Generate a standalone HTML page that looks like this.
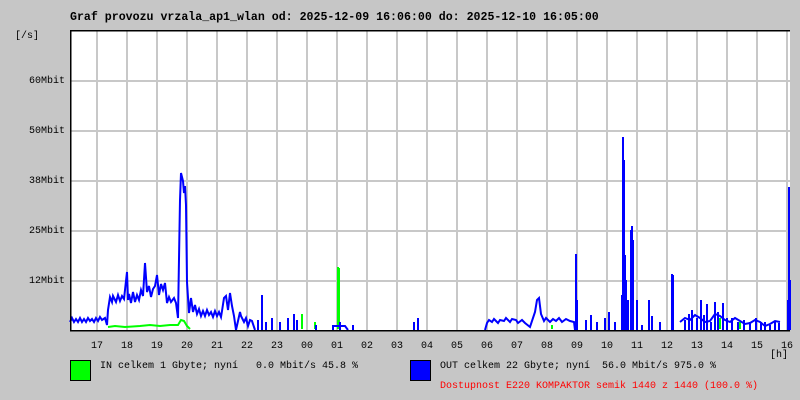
<!DOCTYPE html>
<html><head><meta charset="utf-8"><style>
html,body{margin:0;padding:0;background:#c6c6c6;width:800px;height:400px;overflow:hidden}
body{font-family:"Liberation Mono","DejaVu Sans Mono",monospace;position:relative}
.t{position:absolute;white-space:pre;font-size:10px;color:#000;line-height:12px}
.h{position:absolute;top:341px;width:30px;margin-left:-15px;text-align:center;font-size:10px;line-height:12px}
svg{position:absolute;left:0;top:0}
</style></head><body>
<svg width="800" height="400" viewBox="0 0 800 400" shape-rendering="crispEdges">
<rect x="70" y="30" width="720" height="300" fill="#fff"/>
<g stroke="#c8c8c8" stroke-width="2">
<path d="M97 31V330M127 31V330M157 31V330M187 31V330M217 31V330M247 31V330M277 31V330M307 31V330M337 31V330M367 31V330M397 31V330M427 31V330M457 31V330M487 31V330M517 31V330M547 31V330M577 31V330M607 31V330M637 31V330M667 31V330M697 31V330M727 31V330M757 31V330M787 31V330"/>
<path d="M70 81H790M70 131H790M70 181H790M70 231H790M70 281H790"/>
</g>
<g fill="none" stroke="#00ff00" stroke-width="2" shape-rendering="auto">
<polyline points="108,327 115,326 125,327 140,326 150,325 160,326 170,325 178,325 181,320 184,321 187,326 190,329"/>
<path d="M302 329V314M315 329V322M338 329V267M339 329V268M552 329V325M720 329V318M740 329V322M789 329V322"/>
</g>
<g fill="none" stroke="#0000ff" stroke-width="2" shape-rendering="auto">
<polyline points="70,322 72,318 74,322 76,319 78,322 80,318 82,322 84,319 86,322 88,318 90,321 92,319 94,322 96,318 98,321 100,317 102,320 105,318 107,325 108,310 110,297 112,302 113,296 116,302 118,295 120,301 122,296 124,299 127,272 128,300 129,294 131,303 133,292 135,302 137,295 139,300 141,290 143,296 145,263 147,292 149,286 151,297 153,289 155,286 157,275 159,295 161,284 163,290 165,283 167,303 169,297 171,302 174,298 176,303 178,318 180,200 181,173 183,181 184,193 185,186 186,205 187,282 189,313 191,298 193,312 195,305 197,314 199,309 201,316 203,311 205,316 207,310 209,315 211,312 213,317 215,311 217,316 219,312 221,317 222,311 224,298 226,296 228,310 230,293 232,306 234,316 236,330 238,321 240,312 241,316 244,322 246,318 248,326 250,320 252,321 255,330"/>
<path d="M258 330V320M262 330V295M266 330V322M272 330V318M280 330V322M288 330V318M294 330V314M297 330V320M316 330V325M340 330V322M353 330V325M414 330V322M418 330V318"/>
<polyline points="333,330 333,326 345,326 348,330"/>
<polyline points="485,330 487,323 489,320 492,322 494,319 498,323 500,320 504,321 506,318 510,322 512,319 516,320 518,323 522,320 525,323 530,327 535,312 537,300 539,298 541,314 544,321 546,318 550,322 553,319 556,321 559,318 562,322 566,319 570,321 574,322 575,330"/>
<path d="M576 330V254M577 330V300M586 330V320M591 330V315M597 330V322M605 330V318M609 330V312M615 330V322M622 330V295M623 330V137M624 330V160M625 330V255M626 330V280M628 330V300M631 330V230M632 330V226M633 330V240M637 330V300M642 330V325M649 330V300M652 330V316M660 330V322M672 330V274M673 330V275M685 330V320M689 330V314M692 330V310M697 330V318M701 330V300M704 330V315M707 330V304M711 330V322M715 330V302M718 330V312M723 330V303M727 330V318M732 330V318M738 330V322M744 330V320M750 330V322M756 330V318M761 330V322M765 330V322M770 330V325M775 330V322M779 330V323M788 330V300M789 330V187M790 330V280"/>
<polyline points="680,322 685,318 690,320 695,315 700,318 705,322 710,321 715,314 720,316 725,320 730,322 735,318 740,321 745,324 750,323 755,320 760,322 765,326 770,324 775,321 780,322"/>
</g>
<path d="M70.5 30V330.5M70 30.5H790M70 330.5H790" stroke="#000" stroke-width="1.5" fill="none"/>
<rect x="70.5" y="360.5" width="20" height="20" fill="#00ff00" stroke="#000"/>
<rect x="410.5" y="360.5" width="20" height="20" fill="#0000ff" stroke="#000"/>
</svg>
<div class="t" style="left:70px;top:12px;font-weight:bold;font-size:11.6px">Graf provozu vrzala_ap1_wlan od: 2025-12-09 16:06:00 do: 2025-12-10 16:05:00</div>
<div class="t" style="left:15px;top:31px">[/s]</div>
<div class="t" style="left:29px;top:76px">60Mbit</div>
<div class="t" style="left:29px;top:126px">50Mbit</div>
<div class="t" style="left:29px;top:176px">38Mbit</div>
<div class="t" style="left:29px;top:226px">25Mbit</div>
<div class="t" style="left:29px;top:276px">12Mbit</div>
<div class="h" style="left:97px">17</div><div class="h" style="left:127px">18</div><div class="h" style="left:157px">19</div><div class="h" style="left:187px">20</div><div class="h" style="left:217px">21</div><div class="h" style="left:247px">22</div><div class="h" style="left:277px">23</div><div class="h" style="left:307px">00</div><div class="h" style="left:337px">01</div><div class="h" style="left:367px">02</div><div class="h" style="left:397px">03</div><div class="h" style="left:427px">04</div><div class="h" style="left:457px">05</div><div class="h" style="left:487px">06</div><div class="h" style="left:517px">07</div><div class="h" style="left:547px">08</div><div class="h" style="left:577px">09</div><div class="h" style="left:607px">10</div><div class="h" style="left:637px">11</div><div class="h" style="left:667px">12</div><div class="h" style="left:697px">13</div><div class="h" style="left:727px">14</div><div class="h" style="left:757px">15</div><div class="h" style="left:787px">16</div>
<div class="t" style="left:770px;top:350px">[h]</div>
<div class="t" style="left:100px;top:361px">IN celkem 1 Gbyte; nyní   0.0 Mbit/s 45.8 %</div>
<div class="t" style="left:440px;top:361px">OUT celkem 22 Gbyte; nyní  56.0 Mbit/s 975.0 %</div>
<div class="t" style="left:440px;top:381px;color:#ff0000">Dostupnost E220 KOMPAKTOR semik 1440 z 1440 (100.0 %)</div>
</body></html>
